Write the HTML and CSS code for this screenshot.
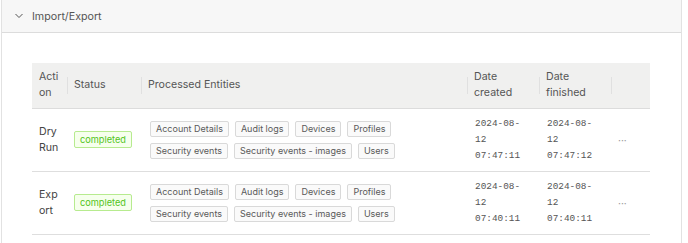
FILE: index.html
```
<!DOCTYPE html>
<html lang="en">
<head>
    <meta charset="UTF-8">
    <meta name="viewport" content="width=device-width, initial-scale=1.0">
    <title>Import/Export</title>
    <link rel="stylesheet" href="styles.css">
</head>
<body>
    <div class="panel">
        <div class="panel-head">
            <svg class="chevron" width="10" height="6" viewBox="0 0 10 6">
                <path d="M1.5 1 L5 4.5 L8.5 1" fill="none" stroke="#555" stroke-width="1"/>
            </svg>
            <span>Import/Export</span>
        </div>
        <div class="panel-body">
            <table class="jobs">
                <colgroup>
                    <col style="width: 36px">
                    <col style="width: 74px">
                    <col style="width: 326px">
                    <col style="width: 72px">
                    <col style="width: 72px">
                    <col style="width: 38px">
                </colgroup>
                <thead>
                    <tr>
                        <th class="action">Action</th>
                        <th>Status</th>
                        <th>Processed Entities</th>
                        <th>Date created</th>
                        <th>Date finished</th>
                        <th></th>
                    </tr>
                </thead>
                <tbody>
                    <tr>
                        <td class="action">Dry Run</td>
                        <td><span class="badge">completed</span></td>
                        <td>
                            <div class="tags">
                                <span class="tag">Account Details</span>
                                <span class="tag">Audit logs</span>
                                <span class="tag">Devices</span>
                                <span class="tag">Profiles</span>
                                <span class="tag">Security events</span>
                                <span class="tag">Security events - images</span>
                                <span class="tag">Users</span>
                            </div>
                        </td>
                        <td><div class="date">2024-08-12 07:47:11</div></td>
                        <td><div class="date">2024-08-12 07:47:12</div></td>
                        <td class="more">···</td>
                    </tr>
                    <tr>
                        <td class="action">Export</td>
                        <td><span class="badge">completed</span></td>
                        <td>
                            <div class="tags">
                                <span class="tag">Account Details</span>
                                <span class="tag">Audit logs</span>
                                <span class="tag">Devices</span>
                                <span class="tag">Profiles</span>
                                <span class="tag">Security events</span>
                                <span class="tag">Security events - images</span>
                                <span class="tag">Users</span>
                            </div>
                        </td>
                        <td><div class="date">2024-08-12 07:40:11</div></td>
                        <td><div class="date">2024-08-12 07:40:11</div></td>
                        <td class="more">···</td>
                    </tr>
                </tbody>
            </table>
        </div>
    </div>
</body>
</html>
```

FILE: styles.css
```
body {
    margin: 0;
    font-family: Inter, "Noto Sans", sans-serif;
    color: #444;
    background: #fff;
}
.panel {
    margin-left: 1px;
    width: 679px;
    border-left: 1px solid #e2e2e2;
    border-right: 1px solid #e2e2e2;
}
.panel-head {
    height: 32px;
    display: flex;
    align-items: center;
    gap: 8px;
    padding-left: 12px;
    background: #f7f7f7;
    border-bottom: 1px solid #dcdcdc;
    font-size: 10.7px;
    color: #555;
}
.chevron {
    display: block;
}
.panel-body {
    padding: 30px 30px 8px;
}
.jobs {
    width: 618px;
    table-layout: fixed;
    border-collapse: collapse;
    font-size: 10.6px;
}
.jobs th {
    position: relative;
    height: 45px;
    padding: 6px 6px;
    box-sizing: border-box;
    background: #f0f0ef;
    border-bottom: 1px solid #dcdcdc;
    text-align: left;
    font-weight: normal;
    color: #555;
    line-height: 16px;
}
.jobs th:not(:last-child)::after {
    content: "";
    position: absolute;
    right: 0;
    top: 14px;
    height: 17px;
    width: 1px;
    background: #e0e0e0;
}
.jobs td {
    padding: 7px 6px;
    border-bottom: 1px solid #dedede;
    line-height: 16px;
    vertical-align: middle;
}
.jobs .action {
    padding-left: 7px;
    overflow-wrap: anywhere;
}
.badge {
    display: inline-block;
    padding: 0 5px;
    line-height: 15px;
    font-size: 9.2px;
    color: #52c41a;
    background: #f6ffed;
    border: 1px solid #b7eb8f;
    border-radius: 2px;
}
.tags {
    display: flex;
    flex-wrap: wrap;
    gap: 6px;
    padding-left: 2px;
}
.tag {
    padding: 0 5px;
    line-height: 14px;
    font-size: 9px;
    color: #595959;
    background: #fafafa;
    border: 1px solid #d9d9d9;
    border-radius: 2px;
}
.date {
    width: 52px;
    padding-left: 1px;
    font-family: "Liberation Mono", monospace;
    font-size: 9.4px;
    line-height: 16px;
    color: #555;
}
.more {
    color: #999;
    font-size: 10px;
}
```
